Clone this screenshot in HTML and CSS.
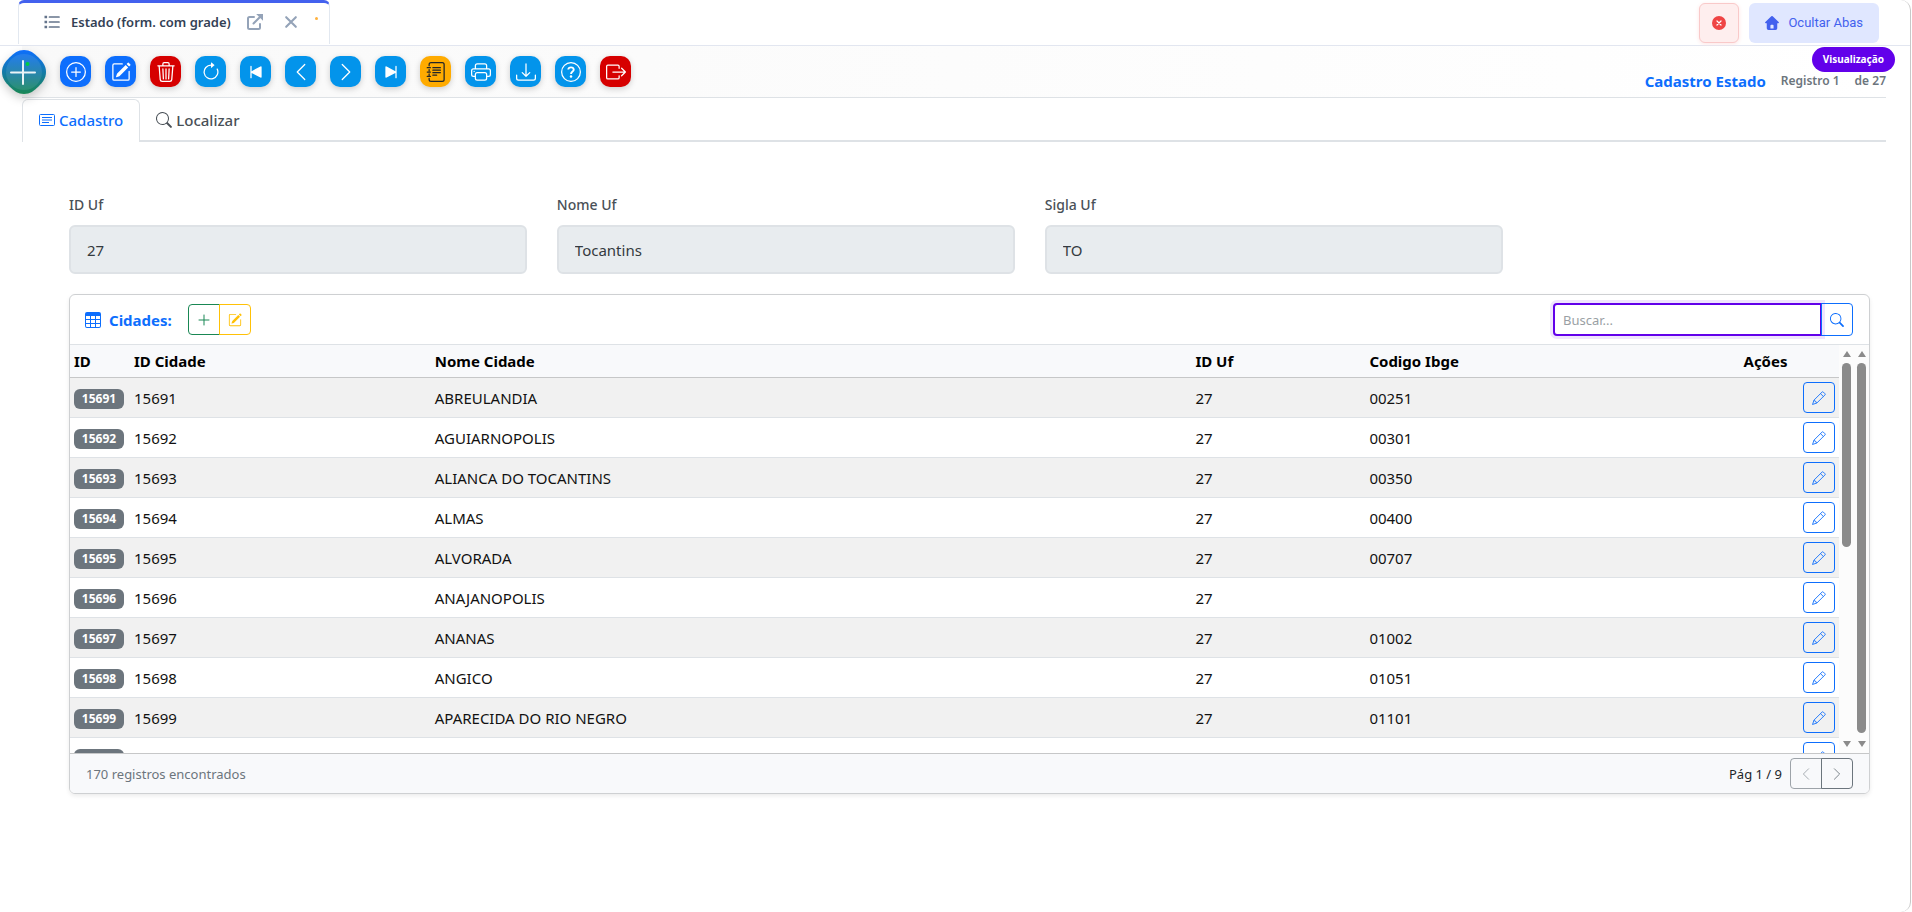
FILE: index.html
```html
<!DOCTYPE html>
<html lang="pt-BR">
<head>
    <meta charset="UTF-8">
    <meta name="viewport" content="width=device-width, initial-scale=1.0">
    <title>Cadastro Estado</title>
    <link rel="stylesheet" href="styles.css">
</head>
<body>
    <!-- icons -->
    <svg class="sprite" aria-hidden="true">
        <symbol id="i-list" viewBox="0 0 16 16"><path fill="none" stroke="currentColor" stroke-width="1.7" stroke-linecap="round" d="M5.5 3h9.5M5.5 8h9.5M5.5 13h9.5"/><path d="M.5 1.8h2.6v2.4H.5zM.5 6.8h2.6v2.4H.5zM.5 11.8h2.6v2.4H.5z"/></symbol>
        <symbol id="i-external" viewBox="0 0 16 16"><path fill="none" stroke="currentColor" stroke-width="2" stroke-linejoin="round" stroke-linecap="round" d="M7 3H2.5Q1 3 1 4.500V13.500Q1 15 2.500 15h9q1.500 0 1.500-1.500V10M6.500 9.500 13 3"/><path d="M9.200 0H16v6.800z"/></symbol>
        <symbol id="i-x" viewBox="0 0 16 16"><path fill="none" stroke="currentColor" stroke-width="2.400" stroke-linecap="round" d="m2.500 2.500 11 11m0-11-11 11"/></symbol>
        <symbol id="i-plus" viewBox="0 0 16 16"><path fill="none" stroke="currentColor" stroke-linecap="round" d="M8 3v10M3 8h10"/></symbol>
        <symbol id="i-plus-circle" viewBox="0 0 16 16"><path d="M8 15A7 7 0 1 1 8 1a7 7 0 0 1 0 14m0 1A8 8 0 1 0 8 0a8 8 0 0 0 0 16"/><path d="M8 4a.5.5 0 0 1 .5.5v3h3a.5.5 0 0 1 0 1h-3v3a.5.5 0 0 1-1 0v-3h-3a.5.5 0 0 1 0-1h3v-3A.5.5 0 0 1 8 4"/></symbol>
        <symbol id="i-edit" viewBox="0 0 16 16"><path d="M15.502 1.940a.5.5 0 0 1 0 .706L14.459 3.690l-2-2L13.502.646a.5.5 0 0 1 .707 0l1.293 1.293zm-1.750 2.456-2-2L4.939 9.210a.5.5 0 0 0-.121.196l-.805 2.414a.250.250 0 0 0 .316.316l2.414-.805a.5.5 0 0 0 .196-.120z"/><path fill-rule="evenodd" d="M1 13.500A1.500 1.500 0 0 0 2.500 15h11a1.500 1.500 0 0 0 1.500-1.500v-6a.5.5 0 0 0-1 0v6a.5.5 0 0 1-.5.5h-11a.5.5 0 0 1-.5-.5v-11a.5.5 0 0 1 .5-.5H9a.5.5 0 0 0 0-1H2.500A1.500 1.500 0 0 0 1 2.500z"/></symbol>
        <symbol id="i-trash" viewBox="0 0 16 16"><path d="M6.500 1h3a.5.5 0 0 1 .5.5v1H6v-1a.5.5 0 0 1 .5-.5M11 2.500v-1A1.500 1.500 0 0 0 9.500 0h-3A1.500 1.500 0 0 0 5 1.500v1H1.500a.5.5 0 0 0 0 1h.538l.853 10.660A2 2 0 0 0 4.885 16h6.230a2 2 0 0 0 1.994-1.840l.853-10.660h.538a.5.5 0 0 0 0-1zm1.958 1-.846 10.580a1 1 0 0 1-.997.920h-6.230a1 1 0 0 1-.997-.920L3.042 3.500z"/><path fill="none" stroke="currentColor" stroke-linecap="round" d="m5.500 5.500.4 8M8 5.500v8m2.500-8-.4 8"/></symbol>
        <symbol id="i-refresh" viewBox="0 0 16 16"><path fill-rule="evenodd" d="M8 3a5 5 0 1 0 4.546 2.914.5.5 0 0 1 .908-.417A6 6 0 1 1 8 2z"/><path d="M8 4.466V.534a.250.250 0 0 1 .410-.192l2.360 1.966c.120.100.120.284 0 .384L8.410 4.658A.250.250 0 0 1 8 4.466"/></symbol>
        <symbol id="i-first" viewBox="0 0 16 16"><path d="M3.500 3.500a.5.5 0 0 1 1 0v3.800l7-3.700q1-.4 1 .5v7.800q0 .9-1 .5l-7-3.700v3.800a.5.5 0 0 1-1 0z"/></symbol>
        <symbol id="i-last" viewBox="0 0 16 16"><path d="M12.500 3.500a.5.5 0 0 0-1 0v3.800l-7-3.700q-1-.4-1 .5v7.800q0 .9 1 .5l7-3.700v3.800a.5.5 0 0 0 1 0z"/></symbol>
        <symbol id="i-left" viewBox="0 0 16 16"><path fill="none" stroke="currentColor" stroke-linecap="round" stroke-linejoin="round" d="m11 2-6 6 6 6"/></symbol>
        <symbol id="i-right" viewBox="0 0 16 16"><path fill="none" stroke="currentColor" stroke-linecap="round" stroke-linejoin="round" d="m5 2 6 6-6 6"/></symbol>
        <symbol id="i-journal" viewBox="0 0 16 16"><path fill="none" stroke="currentColor" stroke-linecap="round" d="M2.500 3V2q0-1.500 1.500-1.500h9q1.500 0 1.500 1.500v12q0 1.500-1.500 1.500H4q-1.500 0-1.500-1.500v-1M2.500 6v1M2.500 9.500v1M1 4.500h2.500M1 8h2.500M1 11.500h2.500M5.500 4.500h6M5.500 6.500h6M5.500 8.500h6M5.500 10.500h3"/></symbol>
        <symbol id="i-printer" viewBox="0 0 16 16"><path d="M2.500 8a.5.5 0 1 0 0-1 .5.5 0 0 0 0 1"/><path d="M5 1a2 2 0 0 0-2 2v2H2a2 2 0 0 0-2 2v3a2 2 0 0 0 2 2h1v1a2 2 0 0 0 2 2h6a2 2 0 0 0 2-2v-1h1a2 2 0 0 0 2-2V7a2 2 0 0 0-2-2h-1V3a2 2 0 0 0-2-2zM4 3a1 1 0 0 1 1-1h6a1 1 0 0 1 1 1v2H4zm1 5a2 2 0 0 0-2 2v1H2a1 1 0 0 1-1-1V7a1 1 0 0 1 1-1h12a1 1 0 0 1 1 1v3a1 1 0 0 1-1 1h-1v-1a2 2 0 0 0-2-2zm7 2v3a1 1 0 0 1-1 1H5a1 1 0 0 1-1-1v-3a1 1 0 0 1 1-1h6a1 1 0 0 1 1 1"/></symbol>
        <symbol id="i-download" viewBox="0 0 16 16"><path d="M.5 9.900a.5.5 0 0 1 .5.5v2.500a1 1 0 0 0 1 1h12a1 1 0 0 0 1-1v-2.500a.5.5 0 0 1 1 0v2.500a2 2 0 0 1-2 2H2a2 2 0 0 1-2-2v-2.500a.5.5 0 0 1 .5-.5"/><path d="M7.646 11.854a.5.5 0 0 0 .708 0l3-3a.5.5 0 0 0-.708-.708L8.500 10.293V1.500a.5.5 0 0 0-1 0v8.793L5.354 8.146a.5.5 0 1 0-.708.708z"/></symbol>
        <symbol id="i-help" viewBox="0 0 16 16"><path d="M8 15A7 7 0 1 1 8 1a7 7 0 0 1 0 14m0 1A8 8 0 1 0 8 0a8 8 0 0 0 0 16"/><path fill="none" stroke="currentColor" stroke-width="1.500" d="M5.800 6Q6 4.300 8 4.300T10.200 6.100C10.200 7.600 8.100 7.700 8 9.600"/><circle cx="8" cy="11.500" r="1"/></symbol>
        <symbol id="i-exit" viewBox="0 0 16 16"><path fill="none" stroke="currentColor" stroke-linecap="round" stroke-linejoin="round" d="M10.500 5V3.500q0-1-1-1h-8q-1 0-1 1v9q0 1 1 1h8q1 0 1-1V11M5.500 8h10M12.500 5l3 3-3 3"/></symbol>
        <symbol id="i-card" viewBox="0 0 16 16"><path fill="none" stroke="currentColor" d="M1.500 2.500h13q1 0 1 1v9q0 1-1 1h-13q-1 0-1-1v-9q0-1 1-1M3 5.500h10M3 8h10M3 10.500h7"/></symbol>
        <symbol id="i-search" viewBox="0 0 16 16"><path d="M11.742 10.344a6.500 6.500 0 1 0-1.397 1.398l3.850 3.850a1 1 0 0 0 1.415-1.414l-3.850-3.850zM12 6.500a5.500 5.500 0 1 1-11 0 5.500 5.500 0 0 1 11 0"/></symbol>
        <symbol id="i-table" viewBox="0 0 16 16"><path fill-rule="evenodd" d="M0 2a2 2 0 0 1 2-2h12a2 2 0 0 1 2 2v12a2 2 0 0 1-2 2H2a2 2 0 0 1-2-2zm15 2h-4v3h4zm0 4h-4v3h4zm0 4h-4v3h3a1 1 0 0 0 1-1zm-5 3v-3H6v3zm-5 0v-3H1v2a1 1 0 0 0 1 1zm-4-4h4V8H1zm0-4h4V4H1zm5-3v3h4V4zm4 4H6v3h4z"/></symbol>
        <symbol id="i-pencil" viewBox="0 0 16 16"><path fill="none" stroke="currentColor" stroke-linejoin="round" d="m.6 15.400 1.700-5L11.500 1.200q.7-.7 1.400 0l1.900 1.900q.7.700 0 1.400L5.600 13.700zM9.700 3l3.300 3.300M2.300 10.400l.8 1.200 1.200.2.200 1.200 1.100.7"/></symbol>
        <symbol id="i-close-circle" viewBox="0 0 16 16"><circle cx="8" cy="8" r="8"/><path fill="none" stroke="#fff" stroke-width="1.400" stroke-linecap="round" d="m5.700 5.700 4.600 4.600m0-4.600-4.600 4.600"/></symbol>
        <symbol id="i-home" viewBox="0 0 16 16"><path fill-rule="evenodd" d="M8 0q.4 0 .8.4l6.800 6.500q.8 1.100-.5 1.300H14V14q0 2-2 2H4q-2 0-2-2V8.200H.9Q-.4 8 .4 6.900L7.200.4Q7.600 0 8 0M6.200 14.200h3.600V11q0-1-1-1H7.200q-1 0-1 1z"/></symbol>
    </svg>

    <div class="window">
        <header class="topbar">
            <div class="page-tab">
                <svg class="icon"><use href="#i-list"/></svg>
                <span class="page-tab-title">Estado (form. com grade)</span>
                <button class="tab-btn" aria-label="Abrir em nova janela"><svg class="icon"><use href="#i-external"/></svg></button>
                <button class="tab-btn" aria-label="Fechar aba"><svg class="icon small"><use href="#i-x"/></svg></button>
                <span class="tab-dot"></span>
            </div>
            <div class="topbar-actions">
                <button class="close-all" aria-label="Fechar todas"><svg class="icon small"><use href="#i-close-circle"/></svg></button>
                <button class="hide-tabs"><svg class="icon small"><use href="#i-home"/></svg>Ocultar Abas</button>
            </div>
        </header>

        <div class="toolbar">
            <button class="menu-btn" aria-label="Menu">
                <svg class="menu-icon" viewBox="0 0 44 44">
                    <defs>
                        <linearGradient id="menu-fill" x1="0" y1="0" x2="0" y2="1">
                            <stop offset="0" stop-color="#0d6efd"/>
                            <stop offset="1" stop-color="#198754"/>
                        </linearGradient>
                    </defs>
                    <path fill="url(#menu-fill)" d="M22 0C28 0 32 3 36.500 7.500S44 16 44 22s-3 10-7.500 14.500S28 44 22 44s-10-3-14.500-7.500S0 28 0 22 3 12 7.500 7.500 16 0 22 0"/>
                    <circle cx="22" cy="22" r="18" fill="#fff" fill-opacity=".09"/>
                    <path stroke="#fff" stroke-opacity=".9" stroke-width="2" stroke-linecap="round" d="M21 11v23M9 22.500h24"/>
                    <circle cx="25.500" cy="14" r="2" fill="#0c4"/>
                </svg>
            </button>
            <div class="tools">
                <button class="tool blue" aria-label="Incluir"><svg class="icon"><use href="#i-plus-circle"/></svg></button>
                <button class="tool blue" aria-label="Editar"><svg class="icon"><use href="#i-edit"/></svg></button>
                <button class="tool red" aria-label="Excluir"><svg class="icon"><use href="#i-trash"/></svg></button>
                <button class="tool sky" aria-label="Atualizar"><svg class="icon"><use href="#i-refresh"/></svg></button>
                <button class="tool sky" aria-label="Primeiro"><svg class="icon"><use href="#i-first"/></svg></button>
                <button class="tool sky" aria-label="Anterior"><svg class="icon"><use href="#i-left"/></svg></button>
                <button class="tool sky" aria-label="Próximo"><svg class="icon"><use href="#i-right"/></svg></button>
                <button class="tool sky" aria-label="Último"><svg class="icon"><use href="#i-last"/></svg></button>
                <button class="tool amber" aria-label="Relatório"><svg class="icon"><use href="#i-journal"/></svg></button>
                <button class="tool sky" aria-label="Imprimir"><svg class="icon"><use href="#i-printer"/></svg></button>
                <button class="tool sky" aria-label="Exportar"><svg class="icon"><use href="#i-download"/></svg></button>
                <button class="tool sky" aria-label="Ajuda"><svg class="icon"><use href="#i-help"/></svg></button>
                <button class="tool red" aria-label="Sair"><svg class="icon"><use href="#i-exit"/></svg></button>
            </div>
            <div class="record-info">
                <h1 class="form-title">Cadastro Estado</h1>
                <span class="record">Registro 1</span>
                <span class="record">de 27</span>
                <span class="mode-badge">Visualização</span>
            </div>
        </div>

        <nav class="nav-tabs">
            <button class="nav-tab active"><svg class="icon"><use href="#i-card"/></svg>Cadastro</button>
            <button class="nav-tab"><svg class="icon"><use href="#i-search"/></svg>Localizar</button>
        </nav>

        <main class="content">
            <form class="fields">
                <div class="field">
                    <label for="id-uf">ID Uf</label>
                    <input type="text" id="id-uf" value="27" disabled>
                </div>
                <div class="field">
                    <label for="nome-uf">Nome Uf</label>
                    <input type="text" id="nome-uf" value="Tocantins" disabled>
                </div>
                <div class="field">
                    <label for="sigla-uf">Sigla Uf</label>
                    <input type="text" id="sigla-uf" value="TO" disabled>
                </div>
            </form>

            <section class="card">
                <div class="card-header">
                    <svg class="icon"><use href="#i-table"/></svg>
                    <h2 class="card-title">Cidades:</h2>
                    <div class="btn-group">
                        <button class="btn green" aria-label="Adicionar cidade"><svg class="icon"><use href="#i-plus"/></svg></button>
                        <button class="btn yellow" aria-label="Editar cidades"><svg class="icon small"><use href="#i-edit"/></svg></button>
                    </div>
                    <div class="search">
                        <input type="text" class="search-input" placeholder="Buscar..." aria-label="Buscar">
                        <button class="btn primary" aria-label="Pesquisar"><svg class="icon small"><use href="#i-search"/></svg></button>
                    </div>
                </div>

                <div class="grid-area">
                    <div class="grid-scroll">
                        <table class="grid">
                            <colgroup>
                                <col class="col-id"><col class="col-code"><col class="col-name"><col class="col-uf"><col><col class="col-actions">
                            </colgroup>
                            <thead>
                                <tr><th>ID</th><th>ID Cidade</th><th>Nome Cidade</th><th>ID Uf</th><th>Codigo Ibge</th><th class="center">Ações</th></tr>
                            </thead>
                            <tbody id="rows"></tbody>
                        </table>
                    </div>
                    <div class="scrollbar"><span class="arrow up"></span><span class="thumb half"></span><span class="arrow down"></span></div>
                    <div class="scrollbar"><span class="arrow up"></span><span class="thumb"></span><span class="arrow down"></span></div>
                </div>

                <div class="card-footer">
                    <span class="total">170 registros encontrados</span>
                    <span class="page">Pág 1 / 9</span>
                    <div class="btn-group">
                        <button class="btn gray" aria-label="Página anterior" disabled><svg class="icon small"><use href="#i-left"/></svg></button>
                        <button class="btn gray" aria-label="Próxima página"><svg class="icon small"><use href="#i-right"/></svg></button>
                    </div>
                </div>
            </section>
        </main>
    </div>

    <script>
        const cidades = [
            [15691, "ABREULANDIA", "00251"],
            [15692, "AGUIARNOPOLIS", "00301"],
            [15693, "ALIANCA DO TOCANTINS", "00350"],
            [15694, "ALMAS", "00400"],
            [15695, "ALVORADA", "00707"],
            [15696, "ANAJANOPOLIS", ""],
            [15697, "ANANAS", "01002"],
            [15698, "ANGICO", "01051"],
            [15699, "APARECIDA DO RIO NEGRO", "01101"],
            ["", "", ""]
        ];

        document.getElementById('rows').innerHTML = cidades.map(([id, nome, ibge]) => `
            <tr>
                <td class="id-cell"><span class="id-badge">${id}</span></td>
                <td>${id}</td>
                <td>${nome}</td>
                <td>${id ? 27 : ''}</td>
                <td>${ibge}</td>
                <td class="right"><button class="btn primary" aria-label="Editar ${id}"><svg class="icon small"><use href="#i-pencil"/></svg></button></td>
            </tr>`).join('');
    </script>
</body>
</html>
```
FILE: styles.css
```css
* {
    box-sizing: border-box;
}
body {
    margin: 0;
    font-family: "Noto Sans", "Open Sans", sans-serif;
    font-size: 15px;
    line-height: 24px;
    color: #212529;
    background: #fff;
}
button, input {
    font: inherit;
    margin: 0;
}
button {
    display: inline-flex;
    align-items: center;
    justify-content: center;
    padding: 0;
    border: none;
    background: none;
    color: inherit;
    cursor: pointer;
}
.sprite {
    display: none;
}
.icon {
    width: 16px;
    height: 16px;
    fill: currentColor;
    flex: none;
}
.icon.small {
    width: 14px;
    height: 14px;
}
.window {
    min-height: 100vh;
    margin-right: 1px;
    border-right: 1px solid #c8c8c8;
    border-radius: 10px;
}

/* top bar */
.topbar {
    display: flex;
    justify-content: space-between;
    height: 46px;
    padding: 0 31px 0 18px;
    border-bottom: 1px solid #e2e6f0;
}
.page-tab {
    display: flex;
    align-items: center;
    width: 312px;
    height: 44px;
    padding: 0 8px 4px 25px;
    border: 1px solid #e2e8f0;
    border-top: 3px solid #4361ee;
    border-bottom: none;
    border-radius: 6px 6px 0 0;
    color: #64748b;
}
.page-tab-title {
    margin: 1px 9px 0 11px;
    font-size: 13px;
    font-weight: 600;
    color: #334155;
    white-space: nowrap;
}
.tab-btn {
    width: 30px;
    color: #94a3b8;
}
.tab-btn + .tab-btn {
    margin-left: 6px;
}
.tab-dot {
    width: 3px;
    height: 3px;
    margin: 0 0 6px 9px;
    border-radius: 50%;
    background: #ffb13d;
}
.topbar-actions {
    display: flex;
    gap: 10px;
    padding-top: 3px;
}
.close-all {
    width: 40px;
    height: 40px;
    border: 1px solid #f9c9c9;
    border-radius: 6px;
    background: #feeeee;
    color: #ef4444;
    box-shadow: 0 1px 4px #fde4e4;
}
.hide-tabs {
    gap: 9px;
    height: 40px;
    padding: 0 16px;
    border-radius: 6px;
    background: #e0e7ff;
    color: #4361ee;
    font-family: Roboto, sans-serif;
    font-size: 13px;
}

/* toolbar */
.toolbar {
    position: relative;
    display: flex;
    align-items: center;
    height: 52px;
    margin: 0 24px 0 22px;
    border-bottom: 1px solid #dee2e6;
    background: linear-gradient(90deg, #f9f9f9, #fff);
}
.menu-btn {
    margin: 0 14px 0 -20px;
}
.menu-icon {
    width: 44px;
    height: 44px;
    filter: drop-shadow(0 4px 5px rgba(0, 0, 0, .2));
}
.tools {
    display: flex;
    gap: 14px;
}
.tool {
    width: 31px;
    height: 31px;
    border-radius: 10px;
    color: #fff;
    box-shadow: 0 2px 6px rgba(0, 0, 0, .18);
}
.tool .icon {
    width: 20px;
    height: 20px;
}
.blue {
    background: #0d6efd;
}
.sky {
    background: #0394eb;
}
.red {
    background: #d60000;
}
.amber {
    background: #ffab00;
    color: #212529;
}
.record-info {
    display: flex;
    align-items: center;
    gap: 15px;
    margin-left: auto;
    padding-top: 18px;
}
.form-title {
    margin: 0;
    font-size: 15px;
    font-weight: 700;
    line-height: 22px;
    color: #0d6efd;
}
.record {
    font-size: 12px;
    font-weight: 600;
    color: #6c757d;
}
.mode-badge {
    position: absolute;
    top: 1px;
    right: -9px;
    padding: 0 11px;
    border-radius: 13px;
    background: #6200ea;
    color: #fff;
    font-size: 10px;
    font-weight: 700;
    line-height: 25px;
}

/* tabs */
.nav-tabs {
    display: flex;
    margin: 1px 24px 0 22px;
    border-bottom: 2px solid #dee2e6;
}
.nav-tab {
    gap: 4px;
    height: 41px;
    padding: 0 16px;
    color: #495057;
    font-weight: 500;
}
.nav-tab.active {
    margin-bottom: -2px;
    height: 43px;
    padding-bottom: 3px;
    border: 1px solid #dee2e6;
    border-bottom: none;
    border-radius: 6px 6px 0 0;
    background: #fff;
    color: #0d6efd;
}

/* form */
.content {
    padding: 51px 40px 0 69px;
}
.fields {
    display: grid;
    grid-template-columns: repeat(3, 19fr) 14fr;
    gap: 30px;
}
.field label {
    display: block;
    margin-bottom: 8px;
    font-size: 14px;
    font-weight: 500;
    color: #495057;
}
.field input {
    width: 100%;
    height: 49px;
    padding: 0 16px;
    border: 2px solid #dee2e6;
    border-radius: 6px;
    background: #e8ecef;
    color: #343a40;
}

/* card */
.card {
    margin-top: 20px;
    border: 1px solid #ced0d2;
    border-radius: 6px;
    box-shadow: 0 2px 4px rgba(0, 0, 0, .08);
    overflow: hidden;
}
.card-header {
    display: flex;
    align-items: center;
    height: 50px;
    padding: 0 16px 0 15px;
    border-bottom: 1px solid #dee2e6;
    color: #0d6efd;
}
.card-title {
    margin: 0 16px 0 8px;
    font-size: 15px;
    font-weight: 700;
}
.btn-group, .search {
    display: flex;
}
.btn {
    width: 32px;
    height: 31px;
    border: 1px solid currentColor;
    border-radius: 4px;
}
.btn-group .btn:first-child {
    border-radius: 4px 0 0 4px;
}
.btn-group .btn:last-child,
.search .btn {
    margin-left: -1px;
    border-radius: 0 4px 4px 0;
}
.green {
    color: #198754;
}
.yellow {
    color: #ffc107;
}
.primary {
    color: #0d6efd;
}
.gray {
    color: #6c757d;
}
.gray:disabled {
    opacity: .65;
}
.search {
    margin-left: auto;
}
.search .btn {
    height: 33px;
}
.search-input {
    width: 269px;
    height: 33px;
    padding: 0 8px;
    border: 2px solid #6200ea;
    border-radius: 4px 0 0 4px;
    box-shadow: 0 0 0 3px #efe5fd;
    font-size: 13px;
    outline: none;
}
.search-input::placeholder {
    color: #9a9fa4;
}

/* grid */
.grid-area {
    display: flex;
    height: 408px;
    overflow: hidden;
}
.grid-scroll {
    flex: 1;
    overflow: hidden;
}
.grid {
    width: 100%;
    table-layout: fixed;
    border-collapse: separate;
    border-spacing: 0;
    color: #111;
}
.col-id {
    width: 60px;
}
.col-code {
    width: 17%;
}
.col-name {
    width: 43%;
}
.col-uf {
    width: 174px;
}
.col-actions {
    width: 147px;
}
.grid th {
    height: 33px;
    padding: 0 4px;
    border-bottom: 1px solid #c6c7c8;
    background: #f8f9fb;
    color: #000;
    font-weight: 700;
    text-align: left;
}
.grid td {
    height: 40px;
    padding: 0 4px;
    border-bottom: 1px solid #dee2e6;
}
.grid .id-cell {
    padding-top: 2px;
}
.grid td .btn {
    vertical-align: middle;
}
.grid tbody tr:nth-child(odd) {
    background: #f1f1f1;
}
.grid .center {
    text-align: center;
}
.grid .right {
    text-align: right;
}
.id-badge {
    display: block;
    width: 50px;
    height: 20px;
    border-radius: 6px;
    background: #6c757d;
    color: #fff;
    font-size: 12px;
    font-weight: 700;
    line-height: 20px;
    text-align: center;
}
.scrollbar {
    display: flex;
    flex-direction: column;
    align-items: center;
    width: 15px;
    padding: 6px 0;
    background: #fcfcfc;
}
.thumb {
    flex: 1;
    width: 9px;
    margin: 6px 0 8px;
    border-radius: 5px;
    background: #8b8b8b;
}
.thumb.half {
    flex: none;
    height: 184px;
    margin-bottom: auto;
}
.arrow {
    border: 4px solid transparent;
}
.arrow.up {
    border-top: none;
    border-bottom: 6px solid #8b8b8b;
}
.arrow.down {
    border-bottom: none;
    border-top: 6px solid #8b8b8b;
}
.card-footer {
    display: flex;
    align-items: center;
    height: 40px;
    padding: 0 16px;
    border-top: 1px solid #c6c7c8;
    background: #f8f9fb;
    font-size: 13px;
}
.total {
    color: #6c757d;
}
.page {
    margin: 0 8px 0 auto;
}
```
